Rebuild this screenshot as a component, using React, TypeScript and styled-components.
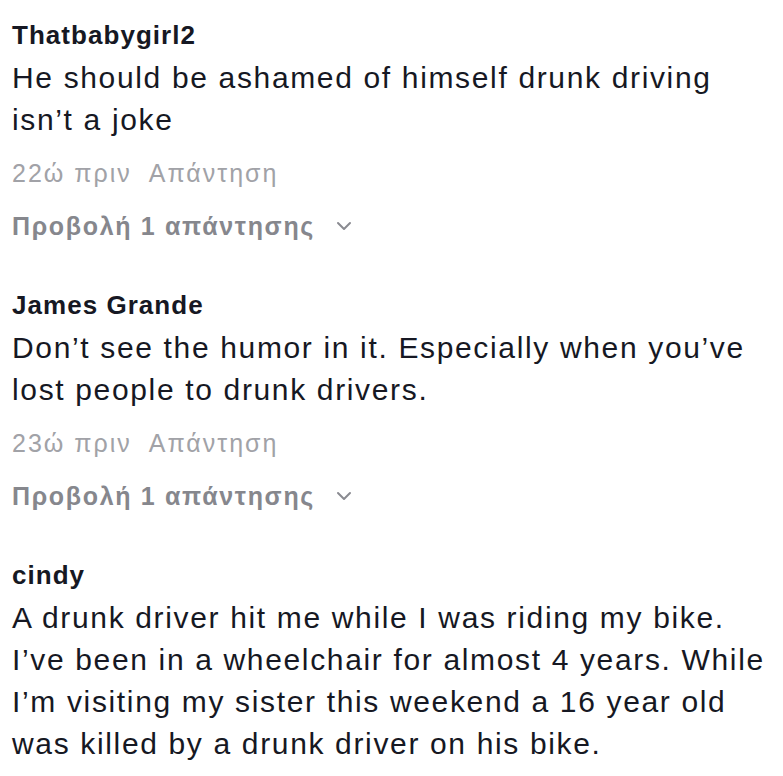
import React from "react";
import styled, { createGlobalStyle } from "styled-components";

const Global = createGlobalStyle`
  html, body { margin: 0; padding: 0; background: #ffffff; }
  body { font-family: "Liberation Sans", Arial, sans-serif; }
`;

const Page = styled.div`
  width: 783px;
  min-height: 776px;
  box-sizing: border-box;
  padding: 17px 14px 0 12px;
  display: flex;
  flex-direction: column;
  gap: 43px;
  background: #fff;
`;

const Comment = styled.div`
  display: flex;
  flex-direction: column;
`;

const Name = styled.div`
  font-size: 26px;
  font-weight: 700;
  line-height: 36px;
  letter-spacing: 0.04em;
  color: #161823;
`;

const Body = styled.div`
  font-size: 30px;
  line-height: 42px;
  letter-spacing: 0.055em;
  color: #161823;
  margin-top: 4px;
`;

const Meta = styled.div`
  display: flex;
  gap: 17px;
  margin-top: 14px;
  font-size: 25px;
  line-height: 36px;
  letter-spacing: 0.08em;
  color: #a1a2a7;
`;

const ViewReplies = styled.div`
  display: flex;
  align-items: center;
  gap: 21px;
  margin-top: 17px;
  font-size: 25px;
  font-weight: 700;
  line-height: 36px;
  letter-spacing: 0.067em;
  color: #86878d;
`;

const Chevron = () => (
  <svg width="16" height="10" viewBox="0 0 16 10" fill="none">
    <path d="M2 2 L8 8 L14 2" stroke="#8a8b91" strokeWidth="2" strokeLinecap="round" strokeLinejoin="round" />
  </svg>
);

type C = { name: string; text: string; time?: string; replies?: boolean };

const comments: C[] = [
  {
    name: "Thatbabygirl2",
    text: "He should be ashamed of himself drunk driving isn’t a joke",
    time: "22ώ πριν",
    replies: true,
  },
  {
    name: "James Grande",
    text: "Don’t see the humor in it. Especially when you’ve lost people to drunk drivers.",
    time: "23ώ πριν",
    replies: true,
  },
  {
    name: "cindy",
    text: "A drunk driver hit me while I was riding my bike. I’ve been in a wheelchair for almost 4 years. While I’m visiting my sister this weekend a 16 year old was killed by a drunk driver on his bike.",
  },
];

export default function App() {
  return (
    <>
      <Global />
      <Page>
        {comments.map((c) => (
          <Comment key={c.name}>
            <Name>{c.name}</Name>
            <Body>{c.text}</Body>
            {c.time && (
              <Meta>
                <span>{c.time}</span>
                <span>Απάντηση</span>
              </Meta>
            )}
            {c.replies && (
              <ViewReplies>
                <span>Προβολή 1 απάντησης</span>
                <Chevron />
              </ViewReplies>
            )}
          </Comment>
        ))}
      </Page>
    </>
  );
}
